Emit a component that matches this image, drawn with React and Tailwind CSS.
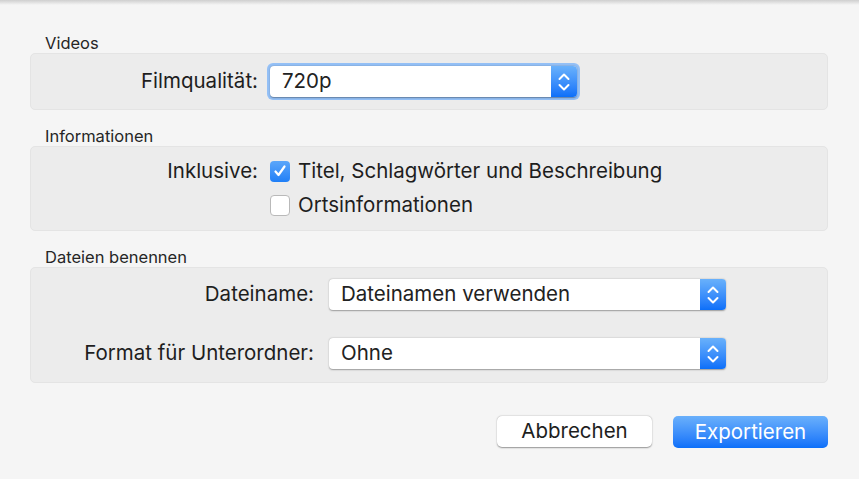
import { useState } from "react"

const font = { fontFamily: '"Inter", "Noto Sans", sans-serif' }

const Stepper = () => (
  <div className="w-[26px] self-stretch rounded-r-[4px] bg-gradient-to-b from-[#69b1fb] to-[#0a6ff9] flex items-center justify-center">
    <svg width="14" height="22" viewBox="0 0 14 22" fill="none" stroke="white" strokeWidth="2" strokeLinecap="round" strokeLinejoin="round">
      <path d="M2.5 8 L7 3.5 L11.5 8" />
      <path d="M2.5 14 L7 18.5 L11.5 14" />
    </svg>
  </div>
)

const Select = ({ value, width, focused }) => (
  <div className={focused ? "rounded-[6px] p-[3px] bg-[#94c0f6]" : ""}>
    <div className={`flex h-[31px] bg-white rounded-[4px] shadow-[0_0.5px_1.5px_rgba(0,0,0,0.35)] ${width}`}>
      <div className="flex-1 flex items-center pl-[12px] text-[20.5px] text-[#222]">{value}</div>
      <Stepper />
    </div>
  </div>
)

const Checkbox = ({ checked }) => checked ? (
  <div className="w-[20px] h-[21px] rounded-[4px] bg-gradient-to-b from-[#5aa6fa] to-[#1f7ff7] flex items-center justify-center">
    <svg width="14" height="14" viewBox="0 0 14 14" fill="none" stroke="white" strokeWidth="2.2" strokeLinecap="round" strokeLinejoin="round">
      <path d="M2.5 7.5 L5.5 11 L11.5 2.5" />
    </svg>
  </div>
) : (
  <div className="w-[20px] h-[21px] rounded-[4px] bg-white border border-[#b9b9b9]" />
)

const Section = ({ title, children, className }) => (
  <div>
    <div className="pl-[15px] text-[16.5px] leading-[20px] text-[#262626]">{title}</div>
    <div className={`bg-[#ececec] rounded-[5px] border border-[#e4e4e4] ${className}`}>{children}</div>
  </div>
)

const App = () => {
  const [titel] = useState(true)

  return (
    <div style={font} className="w-[859px] h-[479px] bg-[#f5f5f5] relative overflow-hidden">
      <div className="h-[5px] bg-gradient-to-b from-[#cfcfcf] to-[#f5f5f5]" />
      <div className="pl-[30px] pr-[31px] pt-[28px]">
        <Section title="Videos" className="h-[57px] flex items-center">
          <div className="w-[227px] text-right text-[20.5px] text-[#1e1e1e]">Filmqualität:</div>
          <div className="ml-[9px]">
            <Select value="720p" width="w-[307px]" focused />
          </div>
        </Section>

        <div className="mt-[16px]">
          <Section title="Informationen" className="h-[85px] flex pt-[12px]">
            <div className="w-[227px] text-right text-[20.5px] text-[#1e1e1e] leading-[24px]">Inklusive:</div>
            <div className="ml-[12px] flex flex-col gap-[10px]">
              <div className="flex items-center gap-[8px]">
                <Checkbox checked={titel} />
                <span className="text-[20.5px] leading-[24px] text-[#1e1e1e]">Titel, Schlagwörter und Beschreibung</span>
              </div>
              <div className="flex items-center gap-[8px]">
                <Checkbox checked={false} />
                <span className="text-[20.5px] leading-[24px] text-[#1e1e1e]">Ortsinformationen</span>
              </div>
            </div>
          </Section>
        </div>

        <div className="mt-[16px]">
          <Section title="Dateien benennen" className="h-[116px] flex flex-col pt-[11px] gap-[28px]">
            <div className="flex items-center">
              <div className="w-[283px] text-right text-[20.5px] text-[#1e1e1e]">Dateiname:</div>
              <div className="ml-[15px]">
                <Select value="Dateinamen verwenden" width="w-[397px]" />
              </div>
            </div>
            <div className="flex items-center">
              <div className="w-[283px] text-right text-[20.5px] text-[#1e1e1e]">Format für Unterordner:</div>
              <div className="ml-[15px]">
                <Select value="Ohne" width="w-[397px]" />
              </div>
            </div>
          </Section>
        </div>

        <div className="flex justify-end gap-[21px] mt-[33px]">
          <button className="w-[155px] h-[31px] bg-white rounded-[5px] shadow-[0_0.5px_1.5px_rgba(0,0,0,0.4)] text-[20.5px] text-[#1e1e1e]">Abbrechen</button>
          <button className="w-[155px] h-[32px] rounded-[5px] bg-gradient-to-b from-[#6ab0fb] to-[#0a6ff9] text-[20.5px] text-white">Exportieren</button>
        </div>
      </div>
    </div>
  )
}

export default App
